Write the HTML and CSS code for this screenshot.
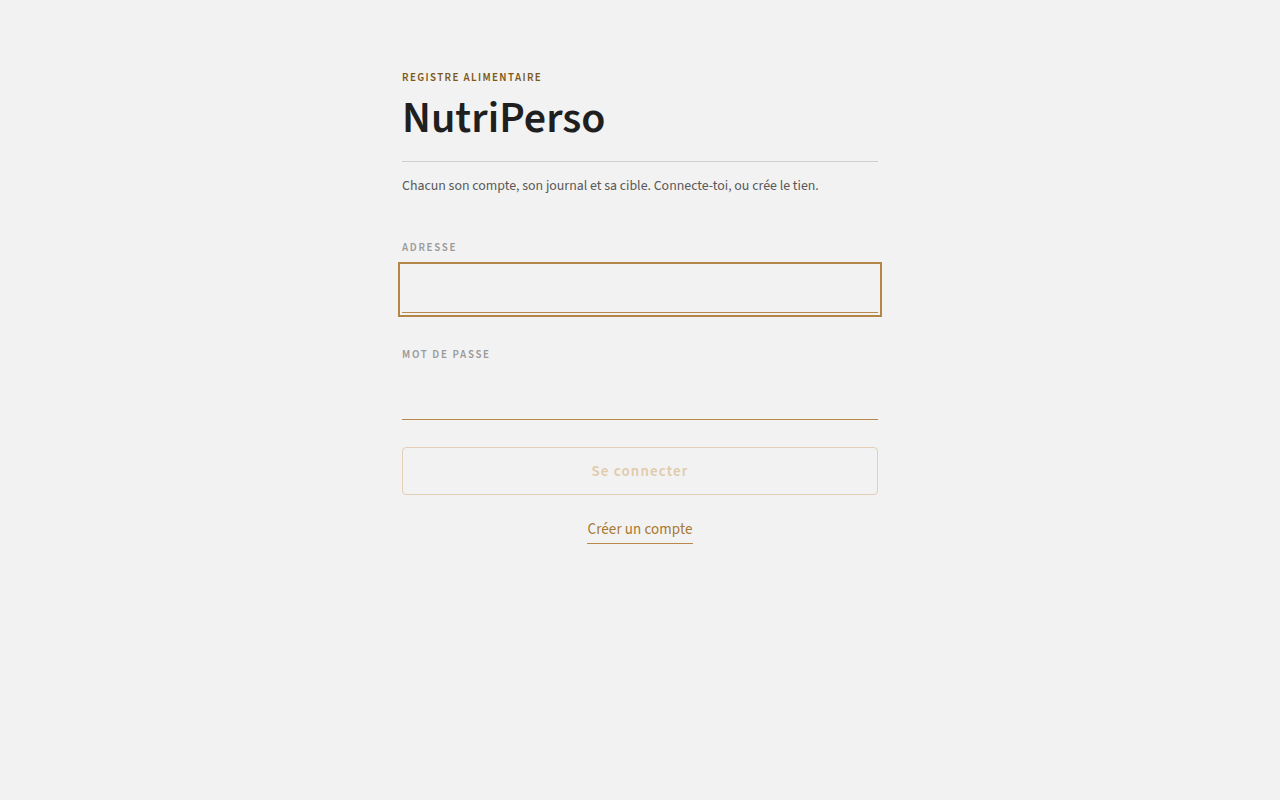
FILE: index.html
```html
<!DOCTYPE html>
<html lang="fr">
<head>
<meta charset="utf-8">
<title>NutriPerso</title>
<link rel="stylesheet" href="styles.css">
</head>
<body>
<main class="page">
  <section class="card">
    <header class="head">
      <p class="eyebrow">Registre alimentaire</p>
      <h1 class="title">NutriPerso</h1>
    </header>
    <p class="lead">Chacun son compte, son journal et sa cible. Connecte-toi, ou crée le tien.</p>
    <form class="form">
      <label class="field">
        <span class="label">Adresse</span>
        <input class="input focus" type="email">
      </label>
      <label class="field">
        <span class="label">Mot de passe</span>
        <input class="input" type="password">
      </label>
      <button class="btn" type="button" disabled>Se connecter</button>
      <div class="alt"><a class="link" href="#">Créer un compte</a></div>
    </form>
  </section>
</main>
</body>
</html>
```

FILE: styles.css
```css
* { box-sizing: border-box; }
html, body { margin: 0; padding: 0; }
body {
  background: #f2f2f2;
  font-family: "Source Sans 3", "Source Sans Pro", "Lato", "Liberation Sans", sans-serif;
  color: #222;
}
.page {
  display: flex;
  justify-content: center;
  padding-top: 71px;
}
.card {
  width: 476px;
  display: flex;
  flex-direction: column;
}
.head {
  padding-bottom: 14px;
  border-bottom: 1px solid #cfcfcf;
}
.eyebrow {
  margin: 0;
  font-size: 11px;
  line-height: 14px;
  font-weight: 600;
  letter-spacing: 1.4px;
  text-transform: uppercase;
  color: #7d5819;
}
.title {
  margin: 6px 0 0;
  font-size: 44px;
  line-height: 56px;
  font-weight: 600;
  letter-spacing: 0;
  color: #1f1f1f;
}
.lead {
  margin: 15px 0 0;
  font-size: 13.85px;
  line-height: 18px;
  color: #585858;
}
.form {
  display: flex;
  flex-direction: column;
  margin-top: 46px;
}
.field {
  display: flex;
  flex-direction: column;
  gap: 11px;
  margin-bottom: 35px;
}
.field:nth-child(2) { margin-bottom: 27px; }
.label {
  font-size: 11px;
  line-height: 14px;
  font-weight: 600;
  letter-spacing: 1.7px;
  text-transform: uppercase;
  color: #9a9a9a;
}
.input {
  height: 47px;
  width: 100%;
  border: 0;
  border-bottom: 1px solid #b8894a;
  background: transparent;
  outline: none;
  font: inherit;
  font-size: 16px;
  padding: 0;
}
.input.focus {
  outline: 2px solid #b38648;
  outline-offset: 2px;
}
.btn {
  height: 48px;
  width: 100%;
  border: 1px solid #e3cfb5;
  border-radius: 4px;
  background: transparent;
  font: inherit;
  font-size: 15px;
  font-weight: 600;
  letter-spacing: 1.15px;
  color: #e1cbac;
}
.alt {
  display: flex;
  justify-content: center;
  margin-top: 26px;
}
.link {
  font-size: 15px;
  line-height: 18px;
  letter-spacing: 0.1px;
  color: #a8772f;
  text-decoration: none;
  padding-bottom: 4px;
  border-bottom: 1px solid #b8894a;
}
```
